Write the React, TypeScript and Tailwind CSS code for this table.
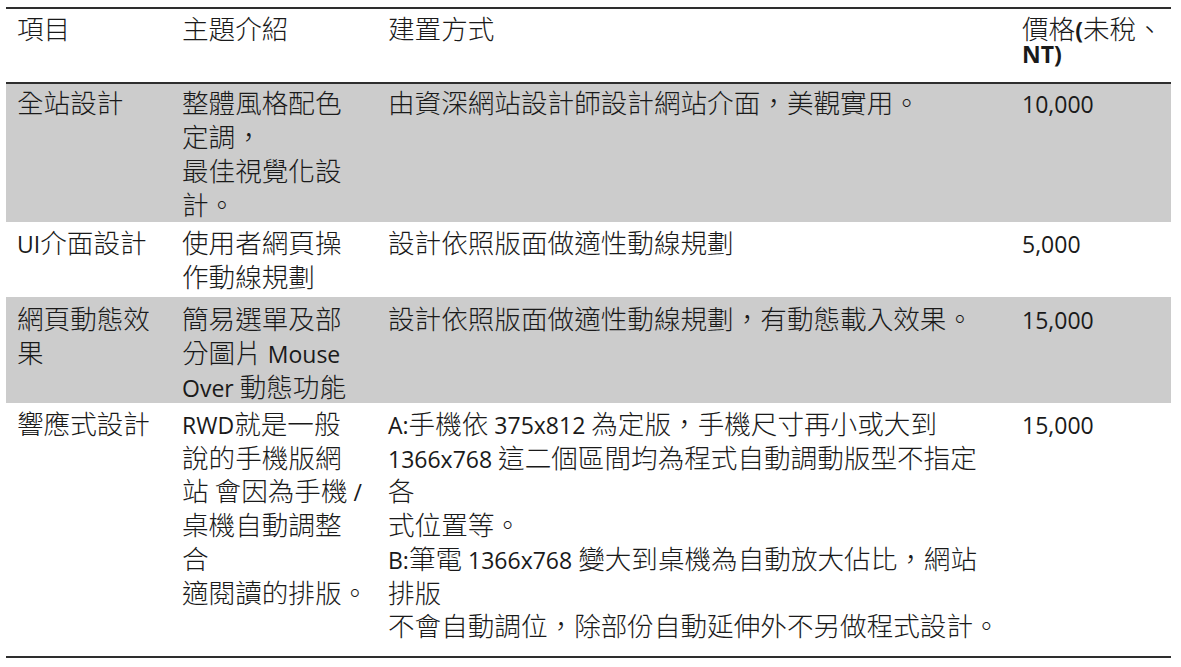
import React from "react";

const LATIN = /([\u0020-\u024F]+)/;

function T({ s, bold = false }: { s: string; bold?: boolean }) {
  const parts = s.split(LATIN).filter((p) => p.length > 0);
  return (
    <>
      {parts.map((p, i) =>
        /^[\u0020-\u024F]+$/.test(p) ? (
          <span
            key={i}
            className={
              bold
                ? "font-['Open_Sans','Noto_Sans_CJK_TC',sans-serif] text-[23px] leading-none font-bold"
                : "font-['Open_Sans','Noto_Sans_CJK_TC',sans-serif] text-[23px] leading-none font-normal"
            }
          >
            {p}
          </span>
        ) : (
          <span key={i}>{p}</span>
        )
      )}
    </>
  );
}

function Cell({ lines }: { lines: string[] }) {
  return (
    <div className="pl-[11px] whitespace-pre">
      {lines.map((l, i) => (
        <div key={i}>
          <T s={l} />
        </div>
      ))}
    </div>
  );
}

type Row = {
  c1: string[];
  c2: string[];
  c3: string[];
  c4: string[];
  cls: string;
};

const rows: Row[] = [
  {
    c1: ["全站設計"],
    c2: ["整體風格配色", "定調，", "最佳視覺化設", "計。"],
    c3: ["由資深網站設計師設計網站介面，美觀實用。"],
    c4: ["10,000"],
    cls: "grid grid-cols-[165px_206px_634px_160px] h-[138px] pt-[1px] bg-[#cccccc] leading-[34px]",
  },
  {
    c1: ["UI介面設計"],
    c2: ["使用者網頁操", "作動線規劃"],
    c3: ["設計依照版面做適性動線規劃"],
    c4: ["5,000"],
    cls: "grid grid-cols-[165px_206px_634px_160px] h-[75px] pt-[3px] bg-white leading-[34px]",
  },
  {
    c1: ["網頁動態效", "果"],
    c2: ["簡易選單及部", "分圖片 Mouse", "Over 動態功能"],
    c3: ["設計依照版面做適性動線規劃，有動態載入效果。"],
    c4: ["15,000"],
    cls: "grid grid-cols-[165px_206px_634px_160px] h-[106px] pt-[4px] bg-[#cccccc] leading-[34px]",
  },
  {
    c1: ["響應式設計"],
    c2: [
      "RWD就是一般",
      "說的手機版網",
      "站 會因為手機 /",
      "桌機自動調整",
      "合",
      "適閱讀的排版。",
    ],
    c3: [
      "A:手機依 375x812 為定版，手機尺寸再小或大到",
      "1366x768 這二個區間均為程式自動調動版型不指定",
      "各",
      "式位置等。",
      "B:筆電 1366x768 變大到桌機為自動放大佔比，網站",
      "排版",
      "不會自動調位，除部份自動延伸外不另做程式設計。",
    ],
    c4: ["15,000"],
    cls: "grid grid-cols-[165px_206px_634px_160px] h-[253px] pt-[3px] bg-white leading-[33.7px]",
  },
];

export default function App() {
  return (
    <div className="w-[1181px] h-[667px] bg-white pt-[7px] pl-[6px] text-[#1a1a1a] text-[26.6px] font-light font-['Noto_Sans_CJK_TC','Noto_Sans_CJK_SC',sans-serif] overflow-hidden">
      <div className="w-[1165px] border-y-2 border-[#2e2e2e]">
        <div className="grid grid-cols-[165px_206px_634px_160px] h-[75px] pt-[2px] border-b-2 border-[#2e2e2e] leading-[34px]">
          <Cell lines={["項目"]} />
          <Cell lines={["主題介紹"]} />
          <Cell lines={["建置方式"]} />
          <div className="pl-[11px] whitespace-pre">
            <div>
              <span>價格</span>
              <T s="(" bold />
              <span>未稅、</span>
            </div>
            <div className="-mt-[10px]">
              <T s="NT)" bold />
            </div>
          </div>
        </div>
        {rows.map((r, i) => (
          <div key={i} className={r.cls}>
            <Cell lines={r.c1} />
            <Cell lines={r.c2} />
            <Cell lines={r.c3} />
            <Cell lines={r.c4} />
          </div>
        ))}
      </div>
    </div>
  );
}
